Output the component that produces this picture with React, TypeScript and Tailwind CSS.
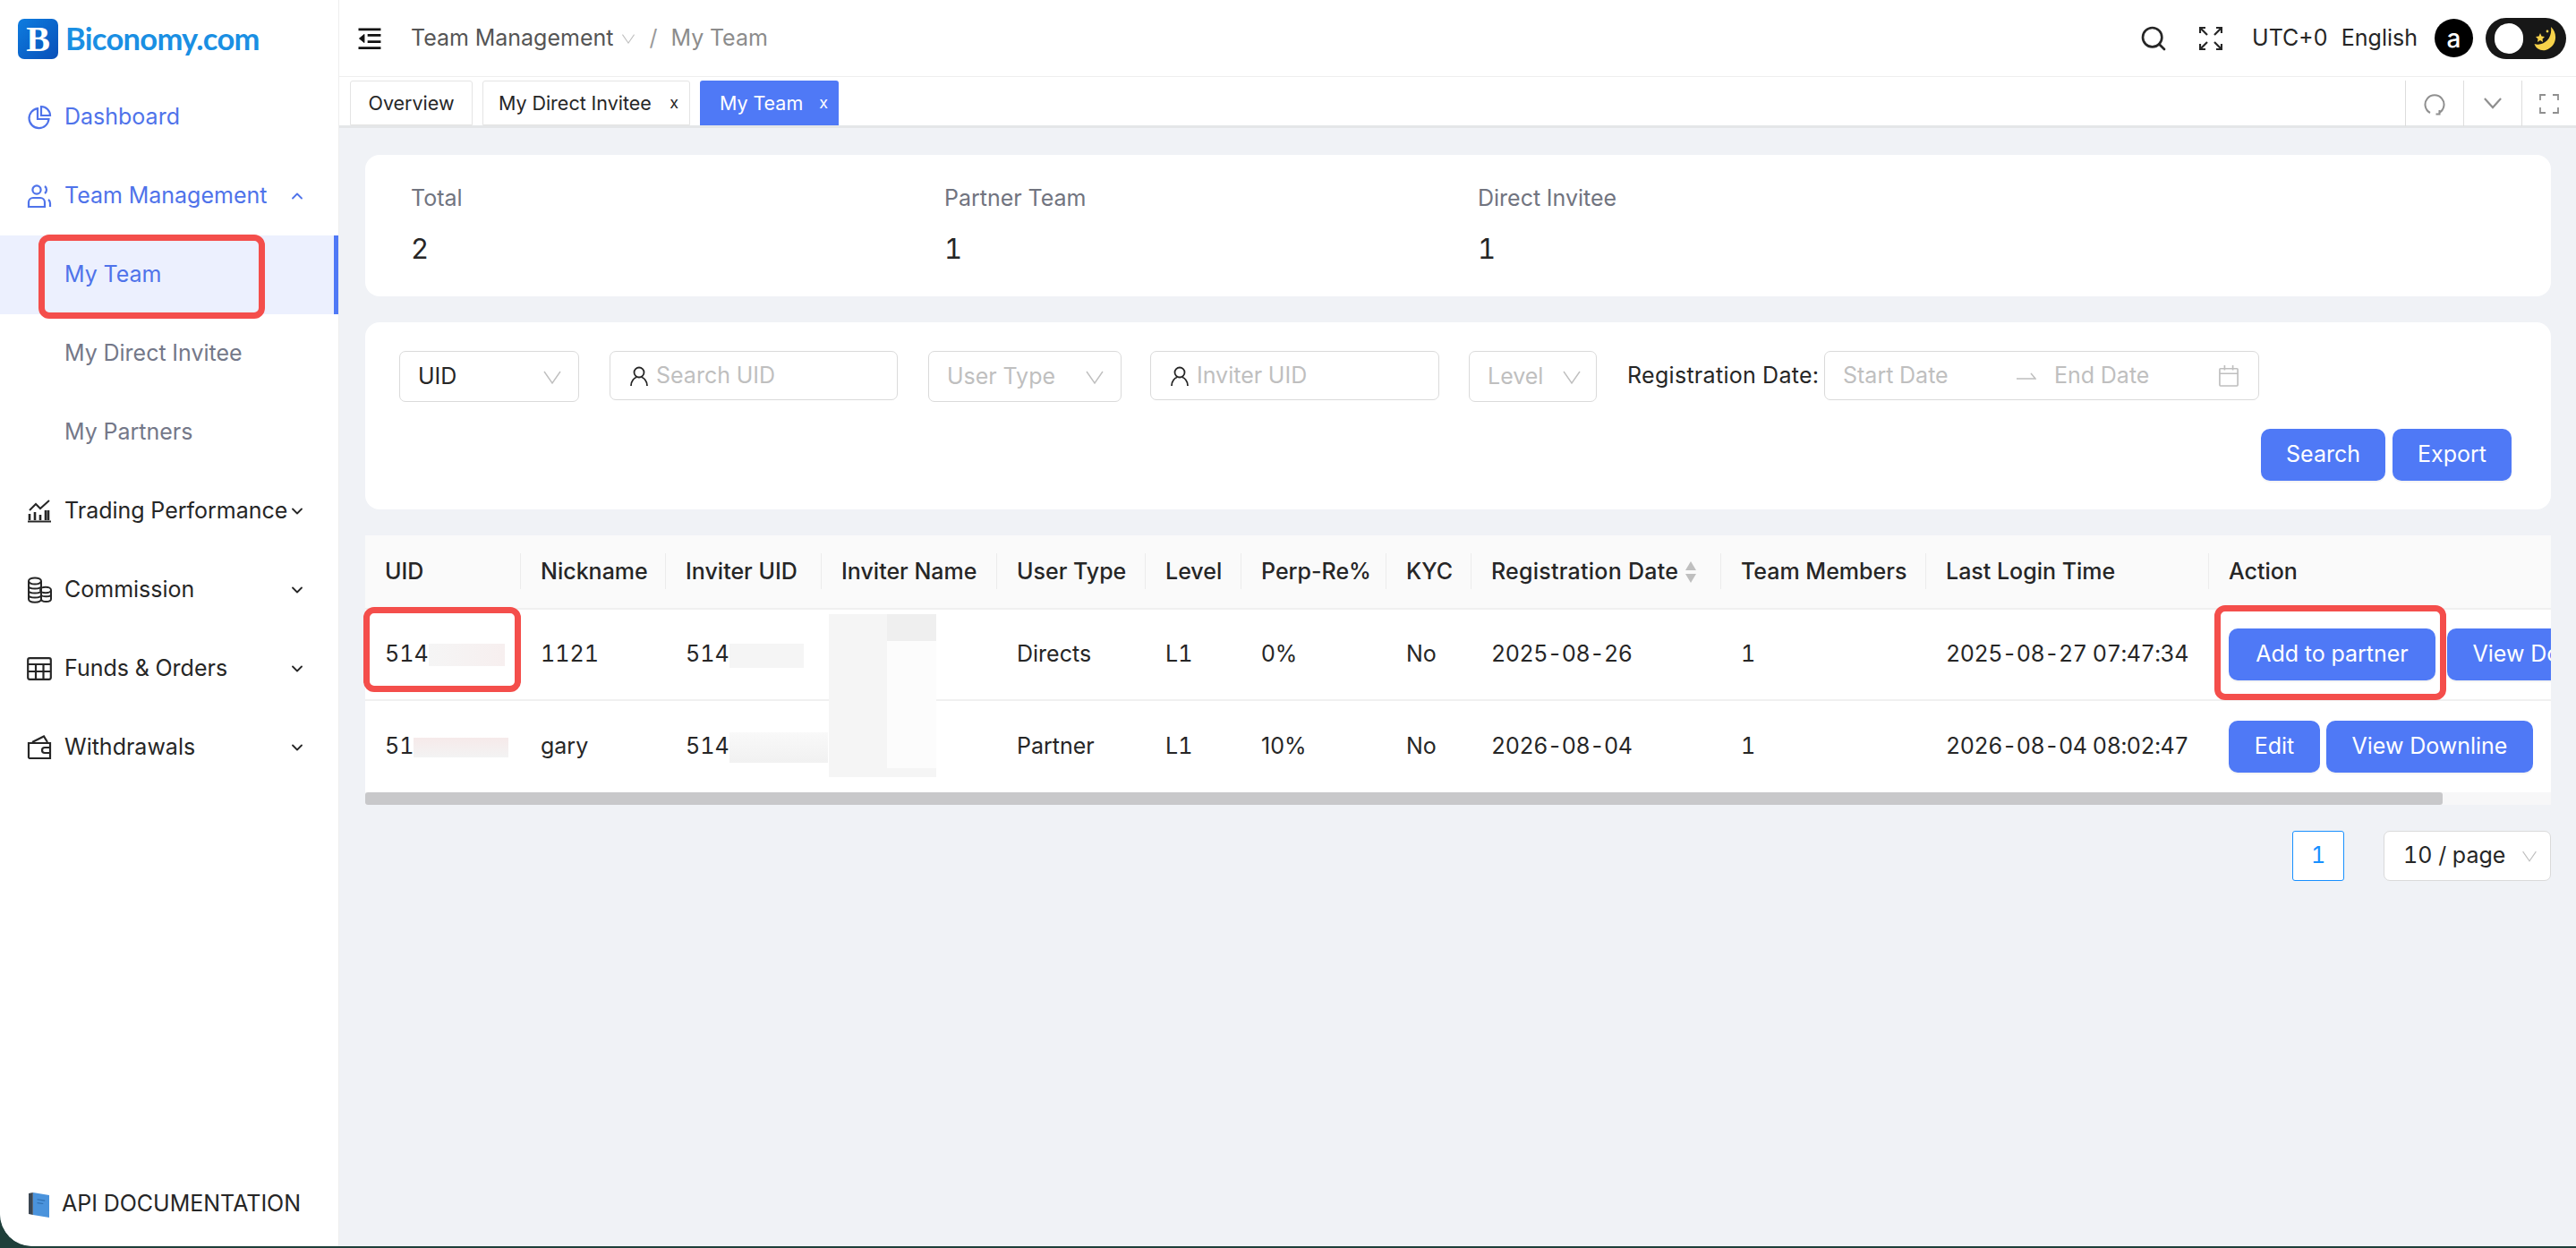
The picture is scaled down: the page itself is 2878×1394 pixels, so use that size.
import { ChevronDown, ChevronUp, Search } from 'lucide-react'
import { ReactNode } from 'react'

const BLUE = 'text-[#4f73ea]'

const Thin = ({ className = 'w-[22px] h-[22px]' }: { className?: string }) => (
  <svg viewBox="0 0 22 22" className={className} fill="none" stroke="#bfbfbf" strokeWidth="1.4">
    <path d="M2 5 L11 18 L20 5" />
  </svg>
)

const PersonIcon = () => (
  <svg viewBox="0 0 24 24" className="w-[24px] h-[24px] shrink-0" fill="none" stroke="#262626" strokeWidth="1.8">
    <circle cx="12" cy="8" r="5.5" />
    <path d="M3 23 C3 17 7 14 9 13.5 M21 23 C21 17 17 14 15 13.5" />
  </svg>
)

const icons: Record<string, ReactNode> = {
  dashboard: (
    <svg viewBox="0 0 28 28" className="w-[28px] h-[28px]" fill="none" stroke="#4f73ea" strokeWidth="2.2">
      <path d="M12 4.2 A11 11 0 1 0 24.5 16 H12 Z" />
      <path d="M16 2 A10 10 0 0 1 26 12 H16 Z" />
    </svg>
  ),
  team: (
    <svg viewBox="0 0 28 28" className="w-[28px] h-[28px]" fill="none" stroke="#4f73ea" strokeWidth="2.2">
      <circle cx="11" cy="7" r="4.6" />
      <path d="M2 26 V21 A5 5 0 0 1 7 16 H15 A5 5 0 0 1 20 21 V26 Z" />
      <path d="M20 3 A5 5 0 0 1 20 11 M24 18 A5 5 0 0 1 26 22 V26" />
    </svg>
  ),
  trading: (
    <svg viewBox="0 0 28 26" className="w-[28px] h-[26px]" fill="none" stroke="#262626" strokeWidth="2">
      <path d="M1 24.5 H27" />
      <path d="M3 23 V16 M9 23 V14 M15 23 V17 M21 23 V12 M24 23 V12" strokeWidth="2.6" />
      <path d="M3 12 L10 5 L15 10 L25 1" />
    </svg>
  ),
  commission: (
    <svg viewBox="0 0 28 30" className="w-[28px] h-[30px]" fill="none" stroke="#262626" strokeWidth="2">
      <ellipse cx="9" cy="5" rx="7" ry="3.6" />
      <path d="M2 5 V25 C2 30 16 30 16 25 V5 M2 10.5 C2 14.5 16 14.5 16 10.5 M2 15.5 C2 19.5 16 19.5 16 15.5 M2 20.5 C2 24.5 16 24.5 16 20.5" />
      <ellipse cx="21" cy="15" rx="6" ry="3.2" />
      <path d="M27 15 V25 C27 29 16 29 16 25 M16 20.5 C17 23 27 23 27 20" />
    </svg>
  ),
  funds: (
    <svg viewBox="0 0 28 26" className="w-[28px] h-[26px]" fill="none" stroke="#262626" strokeWidth="2.2">
      <rect x="1.2" y="1.2" width="25.6" height="23.6" rx="2" />
      <path d="M1 8 H27 M1 16 H27 M10 8 V25 M18.5 8 V25" />
    </svg>
  ),
  withdrawals: (
    <svg viewBox="0 0 28 28" className="w-[28px] h-[28px]" fill="none" stroke="#262626" strokeWidth="2.2">
      <path d="M2 9 H26 V26 H3 A1.5 1.5 0 0 1 2 25 Z" />
      <path d="M6 8 L19 1.5 L23 8" />
      <path d="M26 14 H20 A3 3 0 0 0 20 20 H26" />
    </svg>
  ),
}

const NavItem = ({
  icon,
  label,
  chevron,
  active,
}: {
  icon: string
  label: string
  chevron?: 'up' | 'down'
  active?: boolean
}) => (
  <div className={`flex items-center h-[88px] pl-[30px] pr-[36px] ${active ? BLUE : 'text-[#262626]'}`}>
    <span className="w-[42px] shrink-0 flex items-center">{icons[icon]}</span>
    <span className="flex-1 whitespace-nowrap">{label}</span>
    {chevron === 'down' && <ChevronDown size={20} strokeWidth={2.2} className="shrink-0" />}
    {chevron === 'up' && <ChevronUp size={20} strokeWidth={2.2} className="shrink-0" />}
  </div>
)

const Sidebar = () => (
  <aside className="w-[379px] shrink-0 bg-white border-r border-[#eeeeee] flex flex-col rounded-bl-[36px] text-[25px]">
    <div className="h-[87px] flex items-center pl-[20px] gap-[8px]">
      <div className="w-[45px] h-[45px] rounded-[7px] bg-gradient-to-br from-[#0f7de0] to-[#0a4fb8] flex items-center justify-center text-white text-[40px] font-bold leading-none [font-family:'Liberation_Serif',serif]">
        B
      </div>
      <span className="text-[#1a8fe3] text-[34.5px] font-bold tracking-[-0.7px] leading-none [font-family:Lato,sans-serif]">
        Biconomy.com
      </span>
    </div>
    <NavItem icon="dashboard" label="Dashboard" active />
    <NavItem icon="team" label="Team Management" chevron="up" active />
    <div className="relative h-[88px] flex items-center pl-[72px] bg-[#ecf0fe] border-r-[5px] border-[#4f79f6] text-[#4f73ea]">
      My Team
      <div className="absolute left-[43px] -top-px w-[253px] h-[94px] border-[7px] border-[#f44e4b] rounded-[12px]" />
    </div>
    <div className="h-[88px] flex items-center pl-[72px] text-[#747889]">My Direct Invitee</div>
    <div className="h-[88px] flex items-center pl-[72px] text-[#747889]">My Partners</div>
    <NavItem icon="trading" label="Trading Performance" chevron="down" />
    <NavItem icon="commission" label="Commission" chevron="down" />
    <NavItem icon="funds" label="Funds & Orders" chevron="down" />
    <NavItem icon="withdrawals" label="Withdrawals" chevron="down" />
    <div className="mt-auto h-[92px] pb-[2px] flex items-center pl-[32px] gap-[14px] text-[#262626]">
      <svg viewBox="0 0 24 30" className="w-[23px] h-[29px]">
        <path d="M5 1 L24 4 V30 L5 27 Z" fill="#4a93dc" />
        <path d="M0 2 L5 1 V27 L0 26 Z" fill="#3b4652" />
        <path d="M10 9 L19 10.5 M10 13 L17 14" stroke="#2f6fb0" strokeWidth="1.2" />
      </svg>
      API DOCUMENTATION
    </div>
  </aside>
)

const TopBar = () => (
  <header className="h-[85px] shrink-0 bg-white flex items-center pl-[20px] pr-[11px] text-[25px]">
    <svg viewBox="0 0 28 26" className="w-[27px] h-[24px]" fill="none" stroke="#111111" strokeWidth="3">
      <path d="M1 2 H28 M12 9 H28 M12 17 H28 M1 24.5 H28" />
      <path d="M8 8 L2 13 L8 18 Z" fill="#111111" strokeWidth="1" />
    </svg>
    <span className="ml-[33px] text-[#555555]">Team Management</span>
    <span className="ml-[9px]">
      <Thin className="w-[16px] h-[16px]" />
    </span>
    <span className="ml-[15px] text-[#9a9a9a]">/</span>
    <span className="ml-[15px] text-[#8c8c8c]">My Team</span>
    <div className="ml-auto flex items-center text-[#262626]">
      <Search size={32} strokeWidth={2} className="text-[#262626]" />
      <svg viewBox="0 0 26 26" className="w-[26px] h-[26px] ml-[35px]" fill="none" stroke="#262626" strokeWidth="2.2">
        <path d="M1 1 L9 9 M25 1 L17 9 M1 25 L9 17 M25 25 L17 17" />
        <path d="M1 7 V1 H7 M19 1 H25 V7 M1 19 V25 H7 M25 19 V25 H19" />
      </svg>
      <span className="ml-[33px]">UTC+0</span>
      <span className="ml-[15px]">English</span>
      <span className="ml-[19px] w-[43px] h-[43px] rounded-full bg-black text-white flex items-center justify-center text-[28px] font-medium">
        a
      </span>
      <div className="ml-[14px] w-[90px] h-[46px] rounded-full bg-[#171717] flex items-center justify-between pl-[10px] pr-[10px]">
        <span className="w-[32px] h-[34px] rounded-full bg-white" />
        <svg viewBox="0 0 26 28" className="w-[26px] h-[28px]">
          <path d="M19 1 C27 8 26 23 13 27 C7 28 2 25 0.500 20 C10 23 21 15 19 1 Z" fill="#f7d24a" />
          <path d="M7 8 L8.500 11.500 L12 12 L9.500 14.500 L10 18 L7 16 L4 18 L4.500 14.500 L2 12 L5.500 11.500 Z" fill="#f7d24a" />
          <circle cx="15" cy="6" r="1.400" fill="#f7d24a" />
        </svg>
      </div>
    </div>
  </header>
)

const Tab = ({ label, closable, active, width }: { label: string; closable?: boolean; active?: boolean; width: string }) => (
  <div
    className={`h-[50px] flex items-center px-[17px] rounded-t-[3px] text-[21.5px] ${width} ${
      active ? 'bg-[#4f79f6] text-white pl-[22px]' : 'bg-white border border-[#e4e4e4] text-[#262626]'
    } ${closable ? 'justify-between pr-[12px]' : 'justify-center'}`}
  >
    <span>{label}</span>
    {closable && <span className="text-[18px] leading-none">x</span>}
  </div>
)

const TabBar = () => (
  <div className="h-[58px] shrink-0 bg-white border-t border-[#eeeeee] border-b-[3px] border-b-[#e4e6e8] flex items-start pl-[12px] pt-[4px] gap-[11px]">
    <Tab label="Overview" width="w-[137px]" />
    <Tab label="My Direct Invitee" closable width="w-[232px]" />
    <Tab label="My Team" closable active width="w-[155px]" />
    <div className="ml-auto flex h-[51px] text-[#8f8f8f]">
      <div className="w-[65px] border-l border-[#dddddd] flex items-center justify-center">
        <svg viewBox="0 0 24 24" className="w-[24px] h-[26px]" fill="none" stroke="#8f8f8f" strokeWidth="2">
          <path d="M7 22 A10.500 10.500 0 1 1 17 22" />
          <path d="M13.500 23.500 L17.500 23.500 L17.500 19" />
        </svg>
      </div>
      <div className="w-[65px] border-l border-[#dddddd] flex items-center justify-center">
        <svg viewBox="0 0 22 14" className="w-[20px] h-[13px]" fill="none" stroke="#8f8f8f" strokeWidth="2.4">
          <path d="M1 1 L11 12 L21 1" />
        </svg>
      </div>
      <div className="w-[61px] border-l border-[#dddddd] flex items-center justify-center">
        <svg viewBox="0 0 22 22" className="w-[22px] h-[22px]" fill="none" stroke="#8f8f8f" strokeWidth="1.800">
          <path d="M1 7 V1 H7 M15 1 H21 V7 M1 15 V21 H7 M21 15 V21 H15" />
        </svg>
      </div>
    </div>
  </div>
)

const Stat = ({ label, value }: { label: string; value: string }) => (
  <div className="w-[596px]">
    <div className="text-[#71747f] leading-[30px]">{label}</div>
    <div className="mt-[27px] text-[31px] leading-[30px] text-[#262626]">{value}</div>
  </div>
)

const Field = ({ children, className }: { children: ReactNode; className: string }) => (
  <div className={`bg-white border border-[#dadada] rounded-[7px] flex items-center ${className}`}>{children}</div>
)

const Btn = ({ children, className = '' }: { children: ReactNode; className?: string }) => (
  <button className={`h-[58px] shrink-0 bg-[#4f79f6] text-white rounded-[10px] flex items-center justify-center whitespace-nowrap shadow-[0_2px_0_rgba(0,0,0,0.04)] ${className}`}>
    {children}
  </button>
)

const Filters = () => (
  <section className="mt-[29px] h-[209px] bg-white rounded-[16px] pt-[32px] pl-[38px] pr-[44px] text-[25px]">
    <div className="flex items-start">
      <Field className="w-[201px] h-[57px] pl-[20px] pr-[18px] justify-between text-[#262626]">
        UID
        <Thin />
      </Field>
      <Field className="ml-[34px] w-[322px] h-[55px] pl-[20px] gap-[7px] text-[#bfbfbf]">
        <PersonIcon />
        Search UID
      </Field>
      <Field className="ml-[34px] w-[216px] h-[57px] pl-[20px] pr-[18px] justify-between text-[#bfbfbf]">
        User Type
        <Thin />
      </Field>
      <Field className="ml-[32px] w-[323px] h-[55px] pl-[20px] gap-[7px] text-[#bfbfbf]">
        <PersonIcon />
        Inviter UID
      </Field>
      <Field className="ml-[33px] w-[143px] h-[57px] pl-[20px] pr-[16px] justify-between text-[#bfbfbf]">
        Level
        <Thin />
      </Field>
      <span className="ml-[34px] h-[55px] flex items-center text-[#262626] tracking-[0.3px] whitespace-nowrap w-[220px]">Registration Date:</span>
      <Field className="w-[486px] h-[55px] pl-[20px] pr-[22px] text-[#bfbfbf]">
        <span className="w-[194px]">Start Date</span>
        <svg viewBox="0 0 22 10" className="w-[22px] h-[10px]" fill="none" stroke="#bfbfbf" strokeWidth="1.500">
          <path d="M0 8 H21 L16 2" />
        </svg>
        <span className="ml-[20px]">End Date</span>
        <svg viewBox="0 0 24 26" className="ml-auto w-[22px] h-[24px]" fill="none" stroke="#bfbfbf" strokeWidth="1.800">
          <rect x="1" y="4" width="22" height="21" rx="1" />
          <path d="M1 10 H23 M7 0 V6 M17 0 V6" />
        </svg>
      </Field>
    </div>
    <div className="mt-[30px] flex justify-end gap-[8px]">
      <Btn className="w-[139px] h-[57px]">Search</Btn>
      <Btn className="w-[133px] h-[57px]">Export</Btn>
    </div>
  </section>
)

const Blur = ({ className }: { className: string }) => <span className={`inline-block align-middle ${className}`} />

const headers = [
  { label: 'UID', width: 'w-[174px]' },
  { label: 'Nickname', width: 'w-[162px]' },
  { label: 'Inviter UID', width: 'w-[174px]' },
  { label: 'Inviter Name', width: 'w-[196px]' },
  { label: 'User Type', width: 'w-[166px]' },
  { label: 'Level', width: 'w-[107px]' },
  { label: 'Perp-Re%', width: 'w-[162px]' },
  { label: 'KYC', width: 'w-[95px]' },
  { label: 'Registration Date', width: 'w-[279px]', sort: true },
  { label: 'Team Members', width: 'w-[229px]' },
  { label: 'Last Login Time', width: 'w-[316px]' },
  { label: 'Action', width: 'w-[520px]', last: true },
]

const Td = ({ children, className = '' }: { children?: ReactNode; className?: string }) => (
  <td className={`pl-[22px] whitespace-nowrap ${className}`}>{children}</td>
)

const TeamTable = () => (
  <section className="relative mt-[29px]">
    <div className="overflow-hidden bg-white">
      <table className="table-fixed w-[2580px] border-collapse text-left text-[25px] text-[#262626]">
        <colgroup>
          {headers.map((h) => (
            <col key={h.label} className={h.width} />
          ))}
        </colgroup>
        <thead className="normal-nums">
          <tr className="h-[82px] bg-[#fafafa] border-b-2 border-[#f0f0f0]">
            {headers.map((h) => (
              <th key={h.label} className="relative pl-[22px] font-medium whitespace-nowrap">
                <span className={`flex items-center gap-[7px] ${h.sort ? 'tracking-[0.25px]' : ''}`}>
                  {h.label}
                  {h.sort && (
                    <svg viewBox="0 0 14 24" className="w-[14px] h-[24px]" fill="#bfbfbf">
                      <path d="M7 0 L13 10 H1 Z M7 24 L13 14 H1 Z" />
                    </svg>
                  )}
                </span>
                {!h.last && <span className="absolute right-0 top-[20px] h-[40px] w-px bg-[#ececec]" />}
              </th>
            ))}
          </tr>
        </thead>
        <tbody>
          <tr className="h-[102px] border-b-2 border-[#f0f0f0]">
            <Td>
              514
              <Blur className="w-[85px] h-[25px] -mt-[2px] bg-gradient-to-r from-[#f5f5f5] to-[#f7efef]" />
            </Td>
            <Td>1121</Td>
            <Td>
              514
              <Blur className="w-[83px] h-[27px] bg-[#f5f5f5]" />
            </Td>
            <Td />
            <Td>Directs</Td>
            <Td>L1</Td>
            <Td className="normal-nums">0%</Td>
            <Td>No</Td>
            <Td className="tracking-[-0.45px]">2025-08-26</Td>
            <Td>1</Td>
            <Td className="tracking-[-0.45px]">2025-08-27 07:47:34</Td>
            <td className="pl-[22px]">
              <div className="flex gap-[13px]">
                <Btn className="w-[231px]">Add to partner</Btn>
                <Btn className="w-[231px]">View Downline</Btn>
              </div>
            </td>
          </tr>
          <tr className="h-[103px]">
            <Td>
              51
              <Blur className="w-[106px] h-[22px] bg-gradient-to-b from-[#f6eaea] to-[#f3f3f3]" />
            </Td>
            <Td>gary</Td>
            <Td>
              514
              <Blur className="w-[110px] h-[34px] bg-gradient-to-b from-[#f9f9f9] to-[#f1f1f1]" />
            </Td>
            <Td />
            <Td>Partner</Td>
            <Td>L1</Td>
            <Td className="normal-nums">10%</Td>
            <Td>No</Td>
            <Td className="tracking-[-0.45px]">2026-08-04</Td>
            <Td>1</Td>
            <Td className="tracking-[-0.45px]">2026-08-04 08:02:47</Td>
            <td className="pl-[22px]">
              <div className="flex gap-[7px]">
                <Btn className="w-[102px]">Edit</Btn>
                <Btn className="w-[231px]">View Downline</Btn>
              </div>
            </td>
          </tr>
        </tbody>
      </table>
    </div>
    <div className="h-[14px] bg-[#f7f7f8]">
      <div className="w-[2321px] h-full bg-[#c8c8ca] rounded-[3px]" />
    </div>
    {/* redaction over the inviter name column */}
    <div className="absolute left-[518px] top-[88px] w-[120px] h-[182px] bg-[#fcfcfc]">
      <div className="absolute left-0 top-0 w-[65px] h-full bg-[#f5f5f5]" />
      <div className="absolute right-0 top-0 w-[55px] h-[30px] bg-[#efefef]" />
      <div className="absolute left-0 bottom-0 w-full h-[10px] bg-[#f5f5f5]" />
    </div>
    {/* annotation boxes */}
    <div className="absolute left-[-2px] top-[80px] w-[176px] h-[95px] border-[7px] border-[#f44e4b] rounded-[12px]" />
    <div className="absolute left-[2066px] top-[78px] w-[259px] h-[106px] border-[7px] border-[#f44e4b] rounded-[12px]" />
  </section>
)

const Pager = () => (
  <div className="mt-[29px] flex justify-end text-[25px]">
    <div className="w-[58px] h-[56px] bg-white border border-[#1890ff] rounded-[3px] flex items-center justify-center text-[#1890ff]">1</div>
    <div className="ml-[44px] w-[187px] h-[56px] bg-white border border-[#dadada] rounded-[7px] flex items-center justify-between pl-[21px] pr-[14px] text-[#262626]">
      10 / page
      <Thin className="w-[18px] h-[18px]" />
    </div>
  </div>
)

export default function App() {
  return (
    <div className="w-full h-[1394px] bg-[#1f3f3a] overflow-hidden tabular-nums [font-family:Inter,sans-serif]">
      <div className="flex h-[1392px] rounded-bl-[36px] overflow-hidden bg-[#f0f2f6]">
        <Sidebar />
        <div className="flex-1 min-w-0 flex flex-col">
          <TopBar />
          <TabBar />
          <main className="flex-1 pl-[29px] pr-[28px] pt-[30px]">
            <section className="h-[158px] bg-white rounded-[16px] pt-[33px] pl-[51px] flex text-[25px]">
              <Stat label="Total" value="2" />
              <Stat label="Partner Team" value="1" />
              <Stat label="Direct Invitee" value="1" />
            </section>
            <Filters />
            <TeamTable />
            <Pager />
          </main>
        </div>
      </div>
    </div>
  )
}
